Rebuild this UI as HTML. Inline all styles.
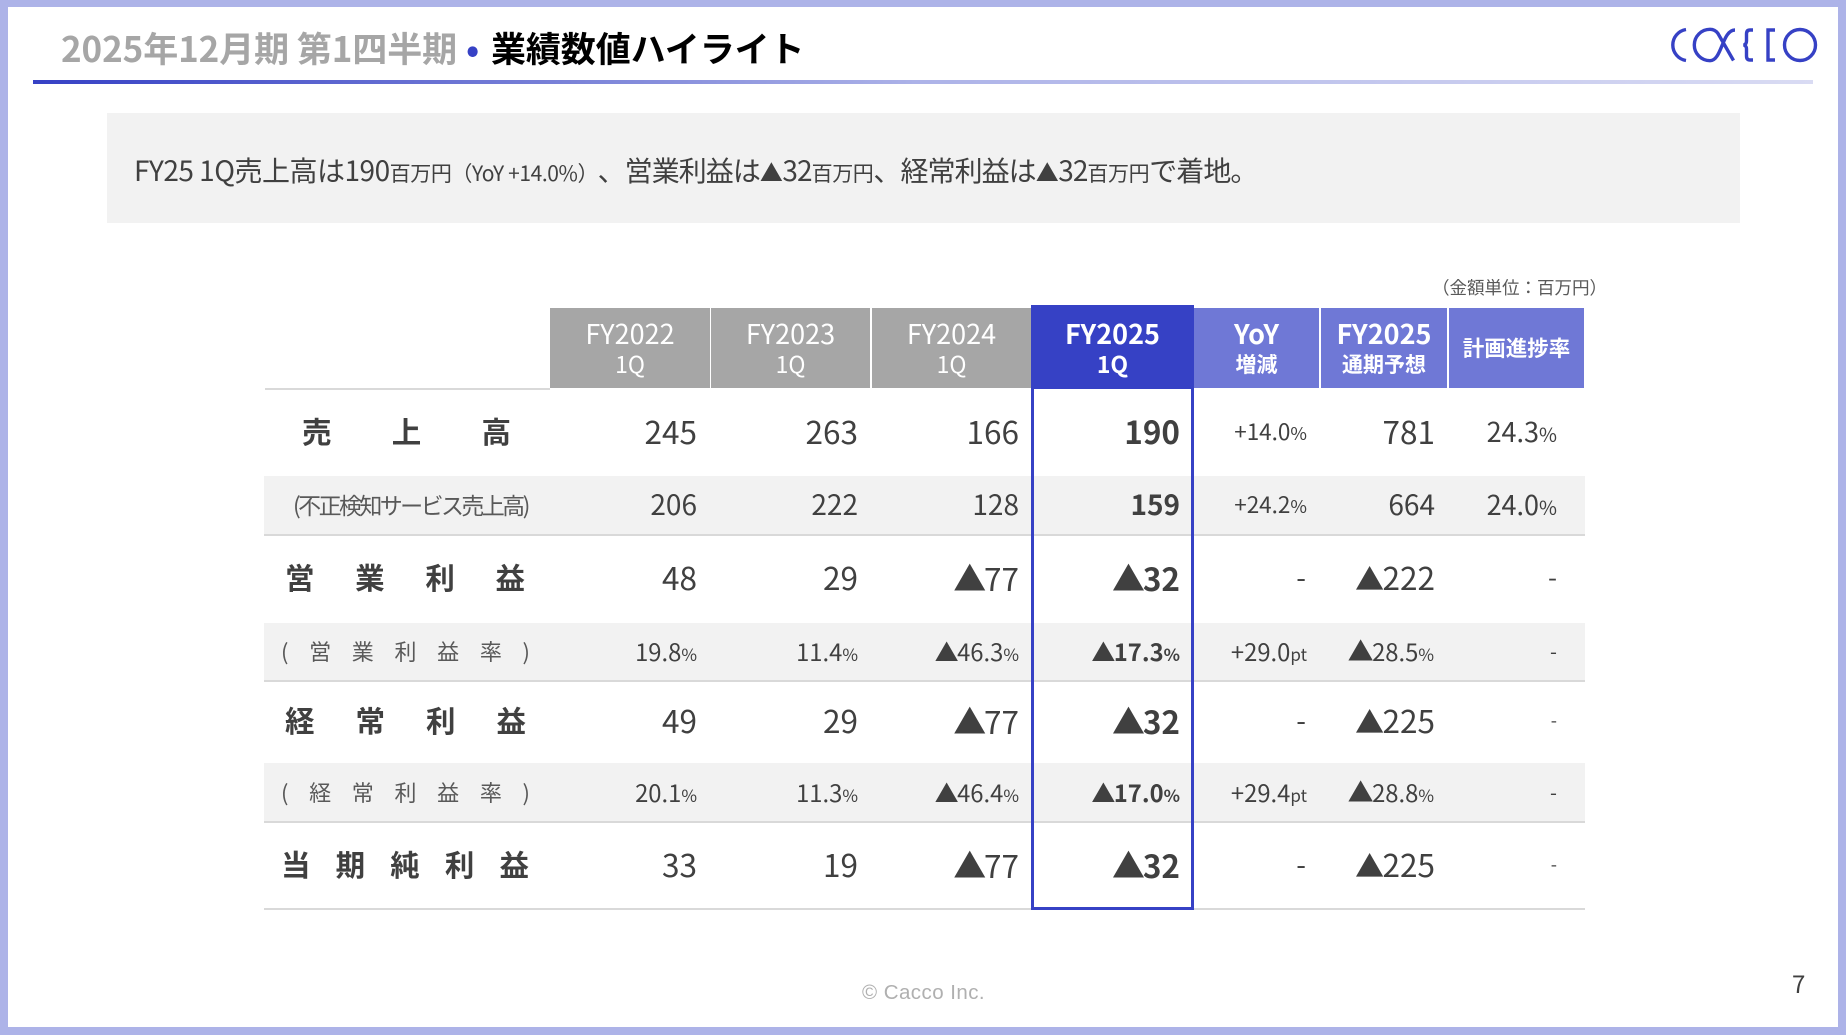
<!DOCTYPE html>
<html lang="ja">
<head>
<meta charset="utf-8">
<title>業績数値ハイライト</title>
<style>
html,body{margin:0;padding:0;background:#fff}
body{width:1846px;height:1035px;position:relative;overflow:hidden;font-family:"Liberation Sans","Noto Sans CJK JP",sans-serif;color:#404040}
#frame{position:absolute;left:0;top:0;width:1846px;height:1035px;box-sizing:border-box;border:solid #adb3e8;border-width:7px 8px 8px 8px;z-index:5;pointer-events:none}
.abs{position:absolute;white-space:nowrap}
#wrap,#wrap *{font-family:"Noto Sans CJK JP","Liberation Sans",sans-serif}
.rule{position:absolute;left:33px;top:80px;width:1780px;height:4px;background:linear-gradient(90deg,#3641c5 0%,#7a82d8 30%,#adb3e8 50%,#d9dbf3 100%)}
.title{top:24px;line-height:48px;font-size:35px;font-weight:700;color:#a6a6a6;letter-spacing:-.1px}
.sum{left:107px;top:113px;width:1633px;height:110px;background:#f2f2f2}
.sumt{left:134px;top:143px;line-height:54px;font-size:28px;color:#404040;letter-spacing:-.5px}
.sumt small{font-size:21px;letter-spacing:-.4px}
.sumt i{font-style:normal;font-size:23px;letter-spacing:-.5px}
.sumt em{font-style:normal;letter-spacing:-.95px;margin-left:10px}
.unit{left:1432px;top:274px;line-height:28px;font-size:17.6px;color:#595959;letter-spacing:-.1px}
.h{position:absolute;top:308px;height:80px;color:#fff;text-align:center;background:#a6a6a6}
.h div{position:absolute;left:0;right:0;white-space:nowrap}
.h .a{top:7px;line-height:36px;font-size:27px}
.h .b{top:38px;line-height:34px;font-size:23px}
.p{background:#6f78d6;font-weight:700}
.p .b{font-size:21px;top:39px}
.bg{position:absolute;left:264px;width:1321px;background:#f2f2f2}
.ln{position:absolute;left:264px;width:1321px;height:2px;background:#d9d9d9}
.lab{position:absolute;display:flex;justify-content:space-between;white-space:nowrap;line-height:50px}
.lab.big{font-size:29.5px;font-weight:700;color:#404040}
.lab.sm{font-size:22px;color:#595959}
.r{position:absolute;left:0;width:1846px;height:50px;line-height:50px;font-size:31.5px}
.r span{position:absolute;white-space:nowrap}
.r small{font-size:18px}
.r i{font-style:normal;font-size:33px;letter-spacing:-2.2px}
.r.t2{font-size:28px}
.r.t2 i{font-size:27px}
.r.t3{font-size:23.8px}
.r.t3 i{font-size:24px;letter-spacing:-1.6px}
.r.t3 small{font-size:17px}
.c1{right:1149px}.c2{right:988px}.c3{right:827px}.c4{right:666px;font-weight:700}
.c5{right:539px;font-size:22.5px}.c6{right:411px}.c7{right:289px}
.t3 .c6,.t3 .c7{font-size:23.8px}
.t3 .c6{right:412px}
.r.t3 .c6 i{font-size:26px;letter-spacing:-1.6px}
.r .c6 i{font-size:29px;letter-spacing:-1.6px}
.c7n{font-size:27px}.c7n small{font-size:19.5px}
.box{position:absolute;left:1031px;top:386px;width:163px;height:524px;box-sizing:border-box;border:3px solid #3641c5;border-top:0}
</style>
</head>
<body>
<div id="wrap">
<div class="abs title" style="left:61px">2025年12月期 第1四半期</div>
<div class="abs title" style="left:466px;color:#3641c5">•</div>
<div class="abs title" style="left:491px;color:#000">業績数値ハイライト</div>
<div class="rule"></div>
<svg class="abs" style="left:0;top:0" width="1846" height="90" viewBox="0 0 1846 90" fill="none" stroke="#3641c5" stroke-width="3.4">
<path d="M1686 29.5A15.7 15.7 0 0 0 1686 60.5"/>
<path d="M1733.5 60.5L1718 33.5Q1715 29.3 1710 29.3A15.7 15.7 0 1 0 1710 60.7C1722 60.7 1722 30 1735 30"/>
<path d="M1753 30H1750Q1746.5 30 1746.5 34V41Q1746.5 44.5 1743.5 45Q1746.5 45.5 1746.5 49V56Q1746.5 60 1750 60H1753"/>
<path d="M1775 30H1768V60H1775"/>
<circle cx="1800" cy="45" r="15.5"/>
</svg>
<div class="abs sum"></div>
<div class="abs sumt">FY25 1Q売上高は190<small>百万円（YoY +14.0%）</small><em>、営業利益は<i>▲</i>32<small>百万円</small>、経常利益は<i>▲</i>32<small>百万円</small>で着地。</em></div>
<div class="abs unit">（金額単位：百万円）</div>

<div class="h" style="left:550px;width:160px"><div class="a">FY2022</div><div class="b">1Q</div></div>
<div class="h" style="left:711px;width:159px"><div class="a">FY2023</div><div class="b">1Q</div></div>
<div class="h" style="left:872px;width:159px"><div class="a">FY2024</div><div class="b">1Q</div></div>
<div class="h" style="left:1031px;width:163px;top:305px;height:84px;background:#3641c5;font-weight:700"><div class="a" style="top:10px">FY2025</div><div class="b" style="top:41px">1Q</div></div>
<div class="h p" style="left:1194px;width:125px"><div class="a">YoY</div><div class="b">増減</div></div>
<div class="h p" style="left:1321px;width:126px"><div class="a">FY2025</div><div class="b">通期予想</div></div>
<div class="h p" style="left:1449px;width:135px"><div class="b" style="top:22px;line-height:36px;font-size:21.5px">計画進捗率</div></div>

<div class="abs" style="left:265px;top:388px;width:285px;height:2px;background:#d9d9d9"></div>
<div class="bg" style="top:476px;height:58px"></div><div class="ln" style="top:534px"></div>
<div class="bg" style="top:623px;height:57px"></div><div class="ln" style="top:680px"></div>
<div class="bg" style="top:763px;height:58px"></div><div class="ln" style="top:821px"></div>
<div class="ln" style="top:908px"></div>

<div class="lab big" style="left:302px;width:209px;top:406px"><span>売</span><span>上</span><span>高</span></div>
<div class="abs" style="left:293px;top:479px;line-height:50px;font-size:23px;letter-spacing:-2.6px;color:#595959">(不正検知サービス売上高)</div>
<div class="lab big" style="left:285px;width:240px;top:552px"><span>営</span><span>業</span><span>利</span><span>益</span></div>
<div class="lab sm" style="left:281px;width:249px;top:626px"><span>(</span><span>営</span><span>業</span><span>利</span><span>益</span><span>率</span><span>)</span></div>
<div class="lab big" style="left:285px;width:241px;top:695px"><span>経</span><span>常</span><span>利</span><span>益</span></div>
<div class="lab sm" style="left:281px;width:249px;top:767px"><span>(</span><span>経</span><span>常</span><span>利</span><span>益</span><span>率</span><span>)</span></div>
<div class="lab big" style="left:281px;width:248px;top:839px"><span>当</span><span>期</span><span>純</span><span>利</span><span>益</span></div>

<div class="r" style="top:406px"><span class="c1">245</span><span class="c2">263</span><span class="c3">166</span><span class="c4">190</span><span class="c5">+14.0<small>%</small></span><span class="c6">781</span><span class="c7 c7n">24.3<small>%</small></span></div>
<div class="r t2" style="top:479px"><span class="c1">206</span><span class="c2">222</span><span class="c3">128</span><span class="c4">159</span><span class="c5">+24.2<small>%</small></span><span class="c6">664</span><span class="c7 c7n">24.0<small>%</small></span></div>
<div class="r" style="top:552px"><span class="c1">48</span><span class="c2">29</span><span class="c3"><i>▲</i>77</span><span class="c4"><i>▲</i>32</span><span class="c5" style="font-size:28px;right:540px">-</span><span class="c6"><i>▲</i>222</span><span class="c7" style="font-size:26px">-</span></div>
<div class="r t3" style="top:626px"><span class="c1">19.8<small>%</small></span><span class="c2">11.4<small>%</small></span><span class="c3"><i>▲</i>46.3<small>%</small></span><span class="c4"><i>▲</i>17.3<small>%</small></span><span class="c5" style="font-size:23.8px">+29.0<small>pt</small></span><span class="c6"><i>▲</i>28.5<small>%</small></span><span class="c7" style="font-size:20px">-</span></div>
<div class="r" style="top:695px"><span class="c1">49</span><span class="c2">29</span><span class="c3"><i>▲</i>77</span><span class="c4"><i>▲</i>32</span><span class="c5" style="font-size:28px;right:540px">-</span><span class="c6"><i>▲</i>225</span><span class="c7" style="font-size:18px">-</span></div>
<div class="r t3" style="top:767px"><span class="c1">20.1<small>%</small></span><span class="c2">11.3<small>%</small></span><span class="c3"><i>▲</i>46.4<small>%</small></span><span class="c4"><i>▲</i>17.0<small>%</small></span><span class="c5" style="font-size:23.8px">+29.4<small>pt</small></span><span class="c6"><i>▲</i>28.8<small>%</small></span><span class="c7" style="font-size:20px">-</span></div>
<div class="r" style="top:839px"><span class="c1">33</span><span class="c2">19</span><span class="c3"><i>▲</i>77</span><span class="c4"><i>▲</i>32</span><span class="c5" style="font-size:28px;right:540px">-</span><span class="c6"><i>▲</i>225</span><span class="c7" style="font-size:18px">-</span></div>

<div class="box"></div>
<div class="abs" style="left:862px;top:980px;line-height:26px;font-size:20.5px;letter-spacing:.45px;color:#b0b0b0;font-family:'Liberation Sans',sans-serif">© Cacco Inc.</div>
<div class="abs" style="left:1792px;top:968px;line-height:30px;font-size:24px;color:#404040">7</div>
</div>
<div id="frame"></div>
</body>
</html>
